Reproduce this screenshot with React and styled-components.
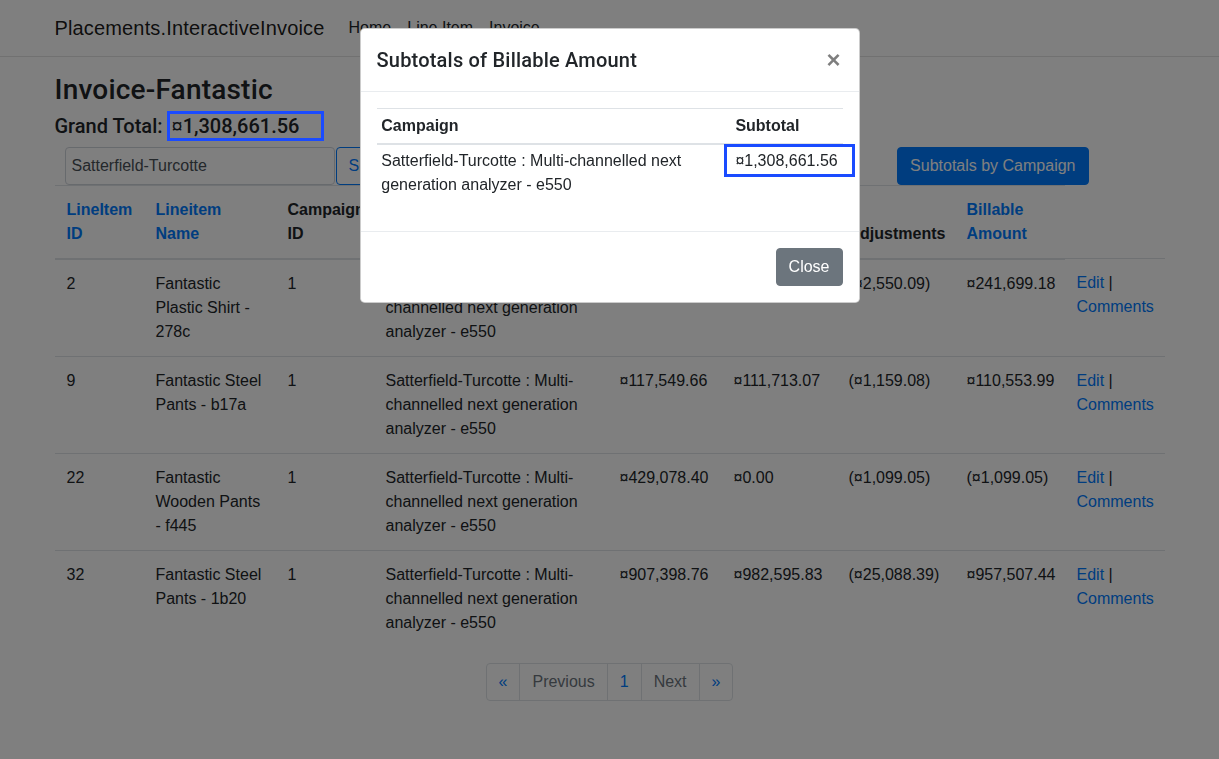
import React from "react";
import styled, { createGlobalStyle } from "styled-components";

const GlobalStyle = createGlobalStyle`
  *, *::before, *::after { box-sizing: border-box; }
  body {
    margin: 0;
    font-family: "Liberation Sans", Arial, sans-serif;
    font-size: 16px;
    line-height: 1.5;
    color: #212529;
    background: #fff;
  }
`;

const campaign = "Satterfield-Turcotte : Multi-channelled next generation analyzer - e550";

const lineItems = [
  { id: 2, name: "Fantastic Plastic Shirt - 278c", booked: "¤250,870.49", actual: "¤244,249.27", adj: "(¤2,550.09)", billable: "¤241,699.18" },
  { id: 9, name: "Fantastic Steel Pants - b17a", booked: "¤117,549.66", actual: "¤111,713.07", adj: "(¤1,159.08)", billable: "¤110,553.99" },
  { id: 22, name: "Fantastic Wooden Pants - f445", booked: "¤429,078.40", actual: "¤0.00", adj: "(¤1,099.05)", billable: "(¤1,099.05)" },
  { id: 32, name: "Fantastic Steel Pants - 1b20", booked: "¤907,398.76", actual: "¤982,595.83", adj: "(¤25,088.39)", billable: "¤957,507.44" },
];

// column widths of the line item table, padding included
const colWidths = [89, 132, 98, 234, 114, 115, 118, 110, 100];

function App() {
  return (
    <>
      <GlobalStyle />
      <Navbar>
        <NavInner>
          <Brand href="#">Placements.InteractiveInvoice</Brand>
          <NavList>
            <NavLink href="#">Home</NavLink>
            <NavLink href="#">Line Item</NavLink>
            <NavLink href="#">Invoice</NavLink>
          </NavList>
        </NavInner>
      </Navbar>

      <Main>
        <Title>Invoice-Fantastic</Title>
        <GrandTotal>
          Grand Total:
          <Highlight>
            <Currency>¤</Currency>1,308,661.56
          </Highlight>
        </GrandTotal>

        <Toolbar>
          <SearchInput defaultValue="Satterfield-Turcotte" />
          <OutlineButton>Search</OutlineButton>
          <PrimaryButton>Subtotals by Campaign</PrimaryButton>
        </Toolbar>

        <Table>
          <colgroup>
            {colWidths.map((w, i) => (
              <col key={i} style={{ width: w }} />
            ))}
          </colgroup>
          <thead>
            <tr>
              <Th><SortLink href="#">LineItem ID</SortLink></Th>
              <Th><SortLink href="#">Lineitem Name</SortLink></Th>
              <Th>Campaign ID</Th>
              <Th>Campaign Name</Th>
              <Th>Booked Amount</Th>
              <Th>Actual Amount</Th>
              <Th>Adjustments</Th>
              <Th><SortLink href="#">Billable Amount</SortLink></Th>
            </tr>
          </thead>
          <tbody>
            {lineItems.map((r) => (
              <tr key={r.id}>
                <Td>{r.id}</Td>
                <Td>{r.name}</Td>
                <Td>1</Td>
                <Td>{campaign}</Td>
                <Td>{r.booked}</Td>
                <Td>{r.actual}</Td>
                <Td>{r.adj}</Td>
                <Td>{r.billable}</Td>
                <Td>
                  <TextLink href="#">Edit</TextLink> | <TextLink href="#">Comments</TextLink>
                </Td>
              </tr>
            ))}
          </tbody>
        </Table>

        <Pagination>
          <PageLink $first>«</PageLink>
          <PageLink $muted>Previous</PageLink>
          <PageLink>1</PageLink>
          <PageLink $muted>Next</PageLink>
          <PageLink $last>»</PageLink>
        </Pagination>
      </Main>

      <Backdrop />
      <ModalWrap>
        <Dialog>
          <ModalHeader>
            <ModalTitle>Subtotals of Billable Amount</ModalTitle>
            <CloseX>×</CloseX>
          </ModalHeader>
          <ModalBody>
            <SmallTable>
              <thead>
                <tr>
                  <SmallTh>Campaign</SmallTh>
                  <SmallTh>Subtotal</SmallTh>
                </tr>
              </thead>
              <tbody>
                <tr>
                  <SmallTd>{campaign}</SmallTd>
                  <SubtotalTd>¤1,308,661.56</SubtotalTd>
                </tr>
              </tbody>
            </SmallTable>
          </ModalBody>
          <ModalFooter>
            <SecondaryButton>Close</SecondaryButton>
          </ModalFooter>
        </Dialog>
      </ModalWrap>
    </>
  );
}

const Navbar = styled.nav`
  background: #fff;
  border-bottom: 1px solid #e2e2e2;
  padding: 8px 0;
`;

const NavInner = styled.div`
  max-width: 1140px;
  margin: 0 auto;
  padding: 0 15px;
  display: flex;
  align-items: center;
`;

const Brand = styled.a`
  font-size: 20px;
  line-height: 30px;
  padding: 5px 0;
  margin-right: 16px;
  letter-spacing: 0.15px;
  color: rgba(0, 0, 0, 0.9);
  text-decoration: none;
`;

const NavList = styled.div`
  display: flex;
`;

const NavLink = styled.a`
  padding: 8px;
  color: #212529;
  text-decoration: none;
`;

const Main = styled.main`
  max-width: 1140px;
  margin: 0 auto;
  padding: 16px 15px 0;
`;

const Title = styled.h3`
  font-family: Roboto, "Liberation Sans", sans-serif;
  font-size: 28px;
  font-weight: 500;
  line-height: 1.2;
  letter-spacing: 0.2px;
  margin: 0 0 4px;
`;

const GrandTotal = styled.h5`
  font-family: Roboto, "Liberation Sans", sans-serif;
  font-size: 20px;
  font-weight: 500;
  line-height: 30px;
  margin: 0 0 6px;
  display: flex;
`;

const Highlight = styled.span`
  position: relative;
  display: inline-block;
  width: 157px;
  margin-left: 4px;
  padding-left: 5px;

  &::after {
    content: "";
    position: absolute;
    inset: 0;
    border: 3px solid #1a4bff;
    z-index: 1100;
  }
`;

const Currency = styled.span`
  font-family: "Liberation Sans", Arial, sans-serif;
  font-weight: 400;
`;

const Toolbar = styled.div`
  display: flex;
  align-items: center;
  padding-left: 10px;
  padding-right: 76px;
`;

const SearchInput = styled.input`
  width: 270px;
  height: 38px;
  padding: 6px;
  font: inherit;
  color: #495057;
  border: 1px solid #ced4da;
  border-radius: 4px;
`;

const BaseButton = styled.button`
  font: inherit;
  line-height: 24px;
  padding: 6px 12px;
  border-radius: 4px;
  border: 1px solid transparent;
`;

const OutlineButton = styled(BaseButton)`
  margin-left: 1px;
  color: #007bff;
  background: transparent;
  border-color: #007bff;
`;

const PrimaryButton = styled(BaseButton)`
  margin-left: auto;
  color: #fff;
  background: #007bff;
  border-color: #007bff;
`;

const SecondaryButton = styled(BaseButton)`
  color: #fff;
  background: #6c757d;
  border-color: #6c757d;
`;

const Table = styled.table`
  width: 100%;
  table-layout: fixed;
  border-collapse: collapse;
  margin-bottom: 16px;
`;

const Th = styled.th`
  padding: 12px;
  text-align: left;
  vertical-align: bottom;
  font-weight: 700;
  border-top: 1px solid #dee2e6;
  border-bottom: 2px solid #dee2e6;
`;

const Td = styled.td`
  padding: 12px;
  vertical-align: top;
  border-top: 1px solid #dee2e6;
`;

const SortLink = styled.a`
  color: #007bff;
  text-decoration: none;
`;

const TextLink = styled.a`
  color: #007bff;
  text-decoration: none;
`;

const Pagination = styled.div`
  display: flex;
  justify-content: center;
`;

const PageLink = styled.a`
  display: block;
  padding: 8px 12px;
  line-height: 20px;
  margin-left: ${(p) => (p.$first ? "0" : "-1px")};
  border: 1px solid #dee2e6;
  color: ${(p) => (p.$muted ? "#6c757d" : "#007bff")};
  background: #fff;
  text-decoration: none;
  border-radius: ${(p) => (p.$first ? "4px 0 0 4px" : p.$last ? "0 4px 4px 0" : "0")};
`;

const Backdrop = styled.div`
  position: fixed;
  inset: 0;
  background: rgba(0, 0, 0, 0.5);
  z-index: 1040;
`;

const ModalWrap = styled.div`
  position: fixed;
  inset: 0;
  z-index: 1050;
`;

const Dialog = styled.div`
  width: 500px;
  margin: 28px auto;
  background: #fff;
  border: 1px solid rgba(0, 0, 0, 0.2);
  border-radius: 4.8px;
`;

const ModalHeader = styled.div`
  display: flex;
  align-items: flex-start;
  justify-content: space-between;
  padding: 16px;
  border-bottom: 1px solid #e9ecef;
`;

const ModalTitle = styled.h5`
  margin: 0;
  font-family: Roboto, "Liberation Sans", sans-serif;
  font-size: 20px;
  font-weight: 500;
  line-height: 30px;
  letter-spacing: 0.2px;
`;

const CloseX = styled.span`
  font-size: 24px;
  font-weight: 700;
  line-height: 30px;
  color: #000;
  opacity: 0.5;
  padding-right: 2px;
`;

const ModalBody = styled.div`
  padding: 16px;
`;

const SmallTable = styled.table`
  width: 100%;
  border-collapse: collapse;
  margin-bottom: 13px;
`;

const SmallTh = styled.th`
  padding: 4.8px;
  text-align: left;
  vertical-align: bottom;
  border-top: 1px solid #dee2e6;
  border-bottom: 2px solid #dee2e6;
`;

const SmallTd = styled.td`
  padding: 4.8px;
  vertical-align: top;
  border-top: 1px solid #dee2e6;
`;

const SubtotalTd = styled(SmallTd)`
  position: relative;
  white-space: nowrap;

  &::after {
    content: "";
    position: absolute;
    top: -1px;
    right: -12px;
    width: 131px;
    height: 33px;
    border: 3px solid #1a4bff;
  }
`;

const ModalFooter = styled.div`
  display: flex;
  justify-content: flex-end;
  padding: 16px;
  border-top: 1px solid #e9ecef;
`;

export default App;
